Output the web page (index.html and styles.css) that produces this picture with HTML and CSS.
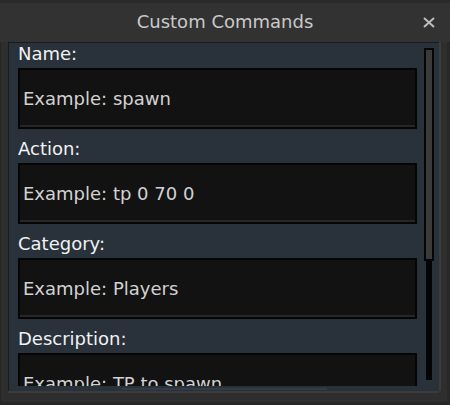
FILE: index.html
```html
<!DOCTYPE html>
<html lang="en">

<head>
    <meta charset="UTF-8">
    <meta name="viewport" content="width=device-width, initial-scale=1.0">
    <title>Custom Commands</title>
    <link rel="stylesheet" href="styles.css">
</head>

<body>

    <div class="window">
        <div class="titlebar">
            <span class="title">Custom Commands</span>
            <span class="close">
                <svg width="12" height="11" viewBox="0 0 12 11">
                    <path d="M1 1 L11 10 M11 1 L1 10" stroke="#bdbdbd" stroke-width="2" fill="none" />
                </svg>
            </span>
        </div>

        <div class="frame">
            <div class="panel">
                <div class="body">
                    <div class="fields">
                        <div class="field">
                            <label>Name:</label>
                            <div class="input">Example: spawn</div>
                        </div>
                        <div class="field">
                            <label>Action:</label>
                            <div class="input">Example: tp 0 70 0</div>
                        </div>
                        <div class="field">
                            <label>Category:</label>
                            <div class="input">Example: Players</div>
                        </div>
                        <div class="field">
                            <label>Description:</label>
                            <div class="input">Example: TP to spawn</div>
                        </div>
                    </div>

                    <div class="scrollbar">
                        <div class="thumb"></div>
                    </div>
                </div>
                <div class="bottom">
                    <div class="hbar"></div>
                </div>
            </div>
        </div>
    </div>

</body>

</html>
```

FILE: styles.css
```css
html, body {
    margin: 0;
    padding: 0;
}

body {
    background-color: #2c2c2c;
    font-family: "DejaVu Sans", sans-serif;
    font-size: 18px;
    overflow: hidden;
}

.window {
    width: 450px;
    height: 405px;
    display: flex;
    flex-direction: column;
    background-color: #313131;
    border-top: 3px solid #2b2b2b;
    box-sizing: border-box;
    overflow: hidden;
}

.titlebar {
    height: 39px;
    flex-shrink: 0;
    display: flex;
    align-items: center;
    justify-content: center;
    position: relative;
    background-color: #323232;
}

.title {
    color: #c9c9c9;
    margin-top: -2px;
}

.close {
    position: absolute;
    right: 15px;
    top: 14px;
    display: flex;
}

.frame {
    flex: 1;
    min-height: 0;
    display: flex;
    padding: 0 8px 11px 7px;
    background-color: #2e2e2e;
    border-left: 1px solid #262626;
    border-bottom: 3px solid #262626;
    border-right: 3px solid #282828;
}

.panel {
    flex: 1;
    min-height: 0;
    display: flex;
    flex-direction: column;
    background-color: #29313b;
    border-top: 1px solid #1b1b1b;
    border-left: 1px solid #1b1b1b;
    box-shadow: 0 2px 0 #3b3b3b, 2px 0 0 #3b3b3b;
}

.body {
    flex: 1;
    display: flex;
    min-height: 0;
}

.fields {
    flex: 1;
    min-height: 0;
    overflow: hidden;
    padding-left: 9px;
    padding-right: 7px;
}

.field {
    display: flex;
    flex-direction: column;
    margin-bottom: 9px;
}

.field label {
    color: #f2f2f2;
    line-height: 22px;
    margin-bottom: 3px;
}

.input {
    height: 57px;
    flex-shrink: 0;
    display: flex;
    align-items: center;
    padding-left: 3px;
    color: #d2d2d2;
    white-space: nowrap;
    background-color: #121212;
    border: 2px solid #050505;
    box-shadow: inset 0 -2px 0 #272727;
}

.scrollbar {
    width: 10px;
    margin: 5px 5px 6px 0;
    display: flex;
    justify-content: center;
    background: linear-gradient(to right, transparent 2px, #050505 2px, #050505 8px, transparent 8px);
}

.thumb {
    width: 6px;
    height: 209px;
    background-color: #3a3a3a;
    border: 2px solid #050505;
}

.bottom {
    height: 5px;
    flex-shrink: 0;
    display: flex;
    align-items: center;
}

.hbar {
    width: 205px;
    height: 2px;
    margin-left: 113px;
    background-color: #323b46;
}
```
